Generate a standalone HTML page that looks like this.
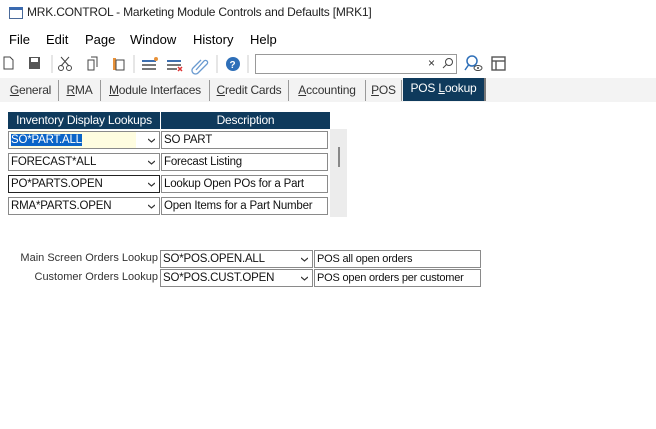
<!DOCTYPE html>
<html><head><style>
*{margin:0;padding:0;box-sizing:border-box}
body{width:656px;height:429px;background:#fff;font-family:"Liberation Sans",sans-serif;font-size:12px;color:#000;position:relative;overflow:hidden}
.a{position:absolute;white-space:nowrap}
.tab{position:absolute;top:80px;height:21px;line-height:21px;font-size:12px;color:#333;border-right:1px solid #999;text-align:center;letter-spacing:-0.2px}
.hd{position:absolute;top:112px;height:17px;background:#0f3a5c;color:#fff;text-align:center;line-height:17px;font-size:12px;letter-spacing:-0.2px}
.cb{position:absolute;height:18px;border:1px solid #8a8a8a;background:#fff;line-height:16px;padding-left:2px;font-size:11.5px;color:#111;letter-spacing:-0.2px;overflow:hidden}
.chev{position:absolute;right:4px;top:5px;width:7px;height:7px}
</style></head><body>
<div class="a" style="left:9px;top:7px;width:14px;height:12px;border:1px solid #4a6a9a;border-top:3px solid #3a6ab0"></div>
<div class="a" style="left:27px;top:5px;font-size:12px;color:#222;letter-spacing:-0.2px">MRK.CONTROL - Marketing Module Controls and Defaults [MRK1]</div>
<div class="a" style="left:9px;top:32px;font-size:13px">File</div>
<div class="a" style="left:46px;top:32px;font-size:13px">Edit</div>
<div class="a" style="left:85px;top:32px;font-size:13px">Page</div>
<div class="a" style="left:130px;top:32px;font-size:13px">Window</div>
<div class="a" style="left:193px;top:32px;font-size:13px">History</div>
<div class="a" style="left:250px;top:32px;font-size:13px">Help</div>
<svg class="a" style="left:0;top:52px" width="256" height="24">
<path d="M4 5h6l3 3v9H4z" fill="none" stroke="#444"/>
<rect x="29" y="5" width="11" height="12" fill="#555"/><rect x="31" y="6" width="7" height="4" fill="#fff"/>
<line x1="52" y1="3" x2="52" y2="21" stroke="#ccc"/>
<circle cx="61" cy="16" r="2.5" fill="none" stroke="#444"/><circle cx="69" cy="16" r="2.5" fill="none" stroke="#444"/><path d="M61 14L69 5M69 14L61 5" stroke="#444"/>
<path d="M88 8h6v10h-6z M91 5h6v10" fill="none" stroke="#444"/>
<path d="M113 6h3v12h-3z" fill="#e8923a"/><rect x="116" y="8" width="8" height="10" fill="none" stroke="#444"/>
<line x1="134" y1="3" x2="134" y2="21" stroke="#ccc"/>
<rect x="142" y="8" width="14" height="2" fill="#3d6fb0"/><rect x="142" y="12" width="14" height="2" fill="#777"/><rect x="142" y="16" width="14" height="2" fill="#777"/><circle cx="156" cy="7" r="2" fill="#e8923a"/>
<rect x="167" y="8" width="14" height="2" fill="#3d6fb0"/><rect x="167" y="12" width="14" height="2" fill="#777"/><rect x="167" y="16" width="10" height="2" fill="#777"/><path d="M178 15l4 4M182 15l-4 4" stroke="#d33" stroke-width="1.5"/>
<path d="M196 18l8-9a2 2 0 0 1 3 3l-9 9a3.5 3.5 0 0 1-5-5l8-8" fill="none" stroke="#6a9ad0" stroke-width="1.3"/>
<line x1="217" y1="3" x2="217" y2="21" stroke="#ccc"/>
<circle cx="233" cy="12" r="7" fill="#2e6fb8"/><text x="229.5" y="16" font-size="10" font-weight="bold" fill="#fff" font-family="Liberation Sans">?</text>
<line x1="248" y1="3" x2="248" y2="21" stroke="#ccc"/>
</svg>
<div class="a" style="left:255px;top:54px;width:202px;height:20px;border:1px solid #999;background:#fff"></div>
<div class="a" style="left:428px;top:56px;font-size:12px;color:#333">×</div>
<svg class="a" style="left:441px;top:56px" width="14" height="14"><circle cx="8" cy="6" r="3.5" fill="none" stroke="#444"/><line x1="5.5" y1="8.5" x2="2" y2="12" stroke="#444"/></svg>
<svg class="a" style="left:464px;top:54px" width="20" height="20"><circle cx="8" cy="7" r="5" fill="none" stroke="#2e6fb8" stroke-width="1.5"/><line x1="4.5" y1="11" x2="1" y2="16" stroke="#2e6fb8" stroke-width="1.5"/><ellipse cx="14" cy="14" rx="4" ry="2.5" fill="none" stroke="#444"/><circle cx="14" cy="14" r="1" fill="#444"/></svg>
<svg class="a" style="left:491px;top:56px" width="16" height="16"><rect x="1" y="1" width="13" height="13" fill="none" stroke="#555" stroke-width="1.4"/><line x1="1" y1="5" x2="14" y2="5" stroke="#555" stroke-width="1.4"/><line x1="5" y1="5" x2="5" y2="14" stroke="#555" stroke-width="1.4"/></svg>
<div class="a" style="left:0;top:78px;width:656px;height:24px;background:#f3f3f3"></div>
<div class="tab" style="left:3px;width:56px"><u>G</u>eneral</div>
<div class="tab" style="left:59px;width:42px"><u>R</u>MA</div>
<div class="tab" style="left:101px;width:109px"><u>M</u>odule Interfaces</div>
<div class="tab" style="left:210px;width:79px"><u>C</u>redit Cards</div>
<div class="tab" style="left:289px;width:77px"><u>A</u>ccounting</div>
<div class="tab" style="left:366px;width:36px"><u>P</u>OS</div>
<div class="tab" style="left:403px;top:78px;height:23px;width:83px;background:#0f3a5c;color:#fff;border-right:2px solid #777">POS <u>L</u>ookup</div>
<div class="hd" style="left:8px;width:152px">Inventory Display Lookups</div>
<div class="hd" style="left:161px;width:169px">Description</div>
<div class="a" style="left:330px;top:129px;width:17px;height:88px;background:#ececec"></div>
<div class="a" style="left:338px;top:147px;width:2px;height:20px;background:#888"></div>

<div class="cb" style="left:8px;top:131px;width:152px"><span style="background:#fffde0;display:inline-block;width:125px"><span style="background:#0a64c8;color:#fff">SO*PART.ALL</span></span><svg class="chev" viewBox="0 0 7 7"><path d="M0 2l3.5 3 3.5-3" fill="none" stroke="#333" stroke-width="1.2"/></svg></div>
<div class="cb" style="left:161px;top:131px;width:167px">SO PART</div>
<div class="cb" style="left:8px;top:153px;width:152px">FORECAST*ALL<svg class="chev" viewBox="0 0 7 7"><path d="M0 2l3.5 3 3.5-3" fill="none" stroke="#333" stroke-width="1.2"/></svg></div>
<div class="cb" style="left:161px;top:153px;width:167px">Forecast Listing</div>
<div class="cb" style="left:8px;top:175px;width:152px;border-color:#222">PO*PARTS.OPEN<svg class="chev" viewBox="0 0 7 7"><path d="M0 2l3.5 3 3.5-3" fill="none" stroke="#333" stroke-width="1.2"/></svg></div>
<div class="cb" style="left:161px;top:175px;width:167px">Lookup Open POs for a Part Number</div>
<div class="cb" style="left:8px;top:197px;width:152px">RMA*PARTS.OPEN<svg class="chev" viewBox="0 0 7 7"><path d="M0 2l3.5 3 3.5-3" fill="none" stroke="#333" stroke-width="1.2"/></svg></div>
<div class="cb" style="left:161px;top:197px;width:167px">Open Items for a Part Number Lookup</div>

<div class="a" style="left:0;top:252px;width:158px;text-align:right;font-size:11px;color:#333">Main Screen Orders Lookup</div>
<div class="cb" style="left:160px;top:250px;width:153px">SO*POS.OPEN.ALL<svg class="chev" viewBox="0 0 7 7"><path d="M0 2l3.5 3 3.5-3" fill="none" stroke="#333" stroke-width="1.2"/></svg></div>
<div class="cb" style="left:314px;top:250px;width:167px;font-size:11px">POS all open orders</div>
<div class="a" style="left:0;top:271px;width:158px;text-align:right;font-size:11px;color:#333">Customer Orders Lookup</div>
<div class="cb" style="left:160px;top:269px;width:153px">SO*POS.CUST.OPEN<svg class="chev" viewBox="0 0 7 7"><path d="M0 2l3.5 3 3.5-3" fill="none" stroke="#333" stroke-width="1.2"/></svg></div>
<div class="cb" style="left:314px;top:269px;width:167px;font-size:11px">POS open orders per customer</div>
</body></html>
